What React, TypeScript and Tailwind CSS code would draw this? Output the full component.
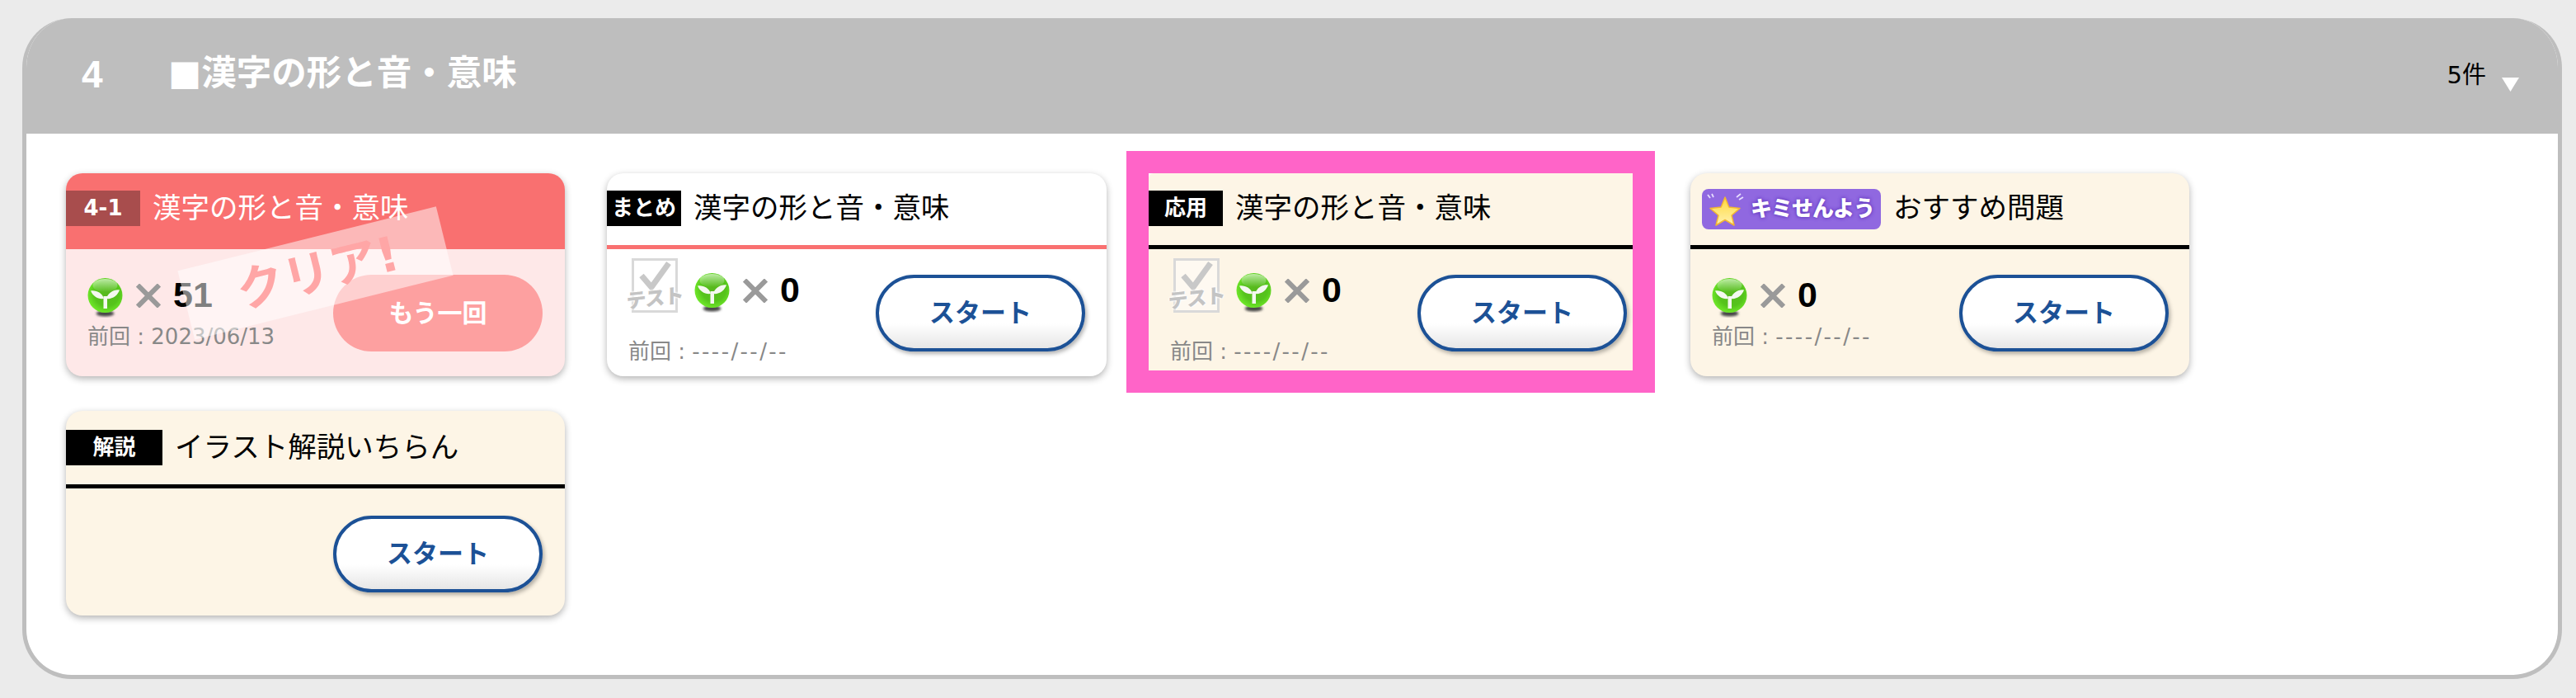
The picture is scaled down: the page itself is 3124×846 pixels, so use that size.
import React from "react";

const Seed = () => (
  <svg width="43" height="48" viewBox="0 0 43 48" className="shrink-0">
    <defs>
      <radialGradient id="seedBall" cx="0.55" cy="0.45" r="0.6">
        <stop offset="0" stopColor="#58b81e" />
        <stop offset="0.6" stopColor="#55c41c" />
        <stop offset="1" stopColor="#74ee2c" />
      </radialGradient>
      <linearGradient id="seedShine" x1="0" y1="0" x2="0" y2="1">
        <stop offset="0" stopColor="#ffffff" stopOpacity="0.6" />
        <stop offset="1" stopColor="#ffffff" stopOpacity="0" />
      </linearGradient>
      <filter id="seedBlur">
        <feGaussianBlur stdDeviation="1.5" />
      </filter>
    </defs>
    <ellipse cx="21.5" cy="43" rx="11" ry="3.5" fill="#444" filter="url(#seedBlur)" />
    <circle cx="21.5" cy="21" r="21" fill="url(#seedBall)" />
    <ellipse cx="21.5" cy="9" rx="15" ry="8" fill="url(#seedShine)" />
    <path d="M20 25C18 18 11 14.5 4 15.5 6.5 22 13 26 20 25ZM23 25C25 18 32 13.5 39 14.5 36.5 21.5 30 26 23 25Z" fill="#f4f8f0" />
    <rect x="19.5" y="22" width="4.5" height="15" fill="#f4f8f0" />
  </svg>
);

const Times = () => (
  <svg width="30" height="29" viewBox="0 0 30 29" className="shrink-0">
    <path d="M2 1.5 28 27.5M28 1.5 2 27.5" stroke="#9a9a9a" strokeWidth="6" fill="none" />
  </svg>
);

const TestMark = () => (
  <div className="relative w-[66px] h-[67px] shrink-0">
    <svg width="66" height="67" viewBox="0 0 66 67" className="block">
      <rect x="6.5" y="1.5" width="53" height="63" fill="#ffffff" fillOpacity="0.45" stroke="#d9d9d9" strokeWidth="3" />
      <path d="M17 21 29 35 50 6" stroke="#c8c8c8" strokeWidth="7" fill="none" />
    </svg>
    <span className="absolute -left-[2px] top-[34px] w-[70px] text-center text-[24px] leading-[30px] font-black tracking-[-1px] whitespace-nowrap text-[#c4c4c4] -skew-y-6 [text-shadow:0_0_2px_#ffffff,0_0_3px_#ffffff,0_0_3px_#ffffff]">
      テスト
    </span>
  </div>
);

const Star = () => (
  <svg width="46" height="40" viewBox="0 0 46 40" className="shrink-0">
    <defs>
      <linearGradient id="kimiStar" x1="0" y1="0" x2="0" y2="1">
        <stop offset="0" stopColor="#ffd83a" />
        <stop offset="1" stopColor="#fff2b0" />
      </linearGradient>
    </defs>
    <path
      d="M23 5 27.8 17 41 18.5 31 27 34 39 23 32.5 12 39 15 27 5 18.5 18.2 17Z"
      fill="url(#kimiStar)"
      stroke="#f2b632"
      strokeWidth="1.5"
      strokeLinejoin="round"
    />
    <path d="M2 2 5 6M7 1 9 5M42 1 37 5M45 5 40 8" stroke="#e6dcff" strokeWidth="1.8" fill="none" />
  </svg>
);

const Count = ({ n }: { n: number }) => (
  <div className="flex items-center">
    <Seed />
    <div className="ml-[16px] -mt-[6px]">
      <Times />
    </div>
    <span className="ml-[15px] -mt-[8px] font-['Liberation_Sans'] text-[43px] leading-[48px] font-bold text-black">
      {n}
    </span>
  </div>
);

const LastDate = ({ date }: { date: string }) => (
  <div className="text-[26px] leading-[36px] text-[#888888] whitespace-nowrap">
    前回 : <span className={date.startsWith("-") ? "tracking-[2.4px]" : ""}>{date}</span>
  </div>
);

const StartButton = ({ label = "スタート", faded = false }: { label?: string; faded?: boolean }) =>
  faded ? (
    <div className="w-[254px] h-[93px] rounded-full bg-[#fda0a0] flex items-center justify-center text-white text-[30px] font-bold shrink-0">
      {label}
    </div>
  ) : (
    <div className="w-[254px] h-[93px] rounded-full border-[4px] border-[#1c5196] bg-gradient-to-b from-white from-65% to-[#e6e6e6] shadow-[2px_3px_5px_rgba(0,0,0,0.3)] flex items-center justify-center text-[#1c5196] text-[31px] font-bold shrink-0">
      {label}
    </div>
  );

const Badge = ({ label, className }: { label: string; className: string }) => (
  <div className={`h-[43px] flex items-center justify-center text-white text-[26px] font-bold shrink-0 ${className}`}>
    {label}
  </div>
);

const Title = ({ text, color = "text-black" }: { text: string; color?: string }) => (
  <span className={`ml-[15px] text-[34.5px] leading-[43px] whitespace-nowrap ${color}`}>{text}</span>
);

export default function App() {
  return (
    <div className="h-[846px] overflow-hidden bg-[#ebebeb] pt-[22px] pl-[27px] [font-family:'DejaVu_Sans','Noto_Sans_CJK_JP',sans-serif]">
      <div className="w-[3080px] h-[801px] rounded-[60px] border-[5px] border-t-0 border-[#bebebe] bg-white overflow-hidden">
        <div className="h-[140px] -mx-[5px] bg-[#bebebe] pl-[72px] pr-[52px] flex items-center text-white font-bold">
          <span className="w-[105px] font-['Liberation_Sans'] text-[46px] leading-none -mt-[5px]">4</span>
          <span className="text-[42.5px] leading-none -mt-[5px] whitespace-nowrap">■漢字の形と音・意味</span>
          <span className="ml-auto text-[29px] leading-none font-normal text-black -mt-[2px]">5件</span>
          <svg width="21" height="17" viewBox="0 0 21 17" className="ml-[19px] mt-[20px]">
            <path d="M0 0H21L10.5 17Z" fill="#ffffff" />
          </svg>
        </div>

        <div className="pt-[48px] pl-[48px] flex flex-wrap">
          {/* 4-1 */}
          <div className="relative w-[605px] h-[246px] mr-[51px] rounded-[20px] bg-[#fee8e8] shadow-[0_3px_8px_rgba(0,0,0,0.3)]">
            <div className="h-[92px] rounded-t-[20px] bg-[#f97070] pt-[21px] flex items-start">
              <Badge label="4-1" className="w-[90px] bg-[#a84d4d]" />
              <Title text="漢字の形と音・意味" color="text-white" />
            </div>
            <div className="flex justify-between pl-[26px] pr-[27px]">
              <div className="pt-[35px]">
                <Count n={51} />
                <div className="mt-[5px]">
                  <LastDate date="2023/06/13" />
                </div>
              </div>
              <div className="pt-[31px]">
                <StartButton label="もう一回" faded />
              </div>
            </div>
            <div className="absolute left-[141px] top-[78px] w-[323px] h-[86px] -rotate-[14deg] bg-white/50 flex items-center justify-center pl-[6px] text-[#ffa6a6] text-[58px] leading-none font-bold whitespace-nowrap">
              クリア!
            </div>
          </div>

          {/* まとめ */}
          <div className="w-[606px] h-[246px] mr-[51px] rounded-[20px] bg-white shadow-[0_3px_8px_rgba(0,0,0,0.3)]">
            <div className="h-[92px] border-b-[5px] border-[#f97070] pt-[21px] flex items-start">
              <Badge label="まとめ" className="w-[90px] bg-black" />
              <Title text="漢字の形と音・意味" />
            </div>
            <div className="flex justify-between pl-[26px] pr-[26px]">
              <div className="pt-[11px]">
                <div className="flex items-start">
                  <div className="-ml-[1px]">
                    <TestMark />
                  </div>
                  <div className="ml-[15px] mt-[18px]">
                    <Count n={0} />
                  </div>
                </div>
                <div className="mt-[28px]">
                  <LastDate date="----/--/--" />
                </div>
              </div>
              <div className="pt-[31px]">
                <StartButton />
              </div>
            </div>
          </div>

          {/* 応用 (highlighted) */}
          <div className="w-[641px] h-[293px] -ml-[27px] -mt-[27px] -mb-[20px] mr-[43px] border-[27px] border-[#ff64c8]">
            <div className="h-full bg-[#fdf5e6] overflow-hidden rounded-tl-[6px]">
              <div className="h-[92px] border-b-[5px] border-black pt-[21px] flex items-start">
                <Badge label="応用" className="w-[90px] bg-black" />
                <Title text="漢字の形と音・意味" />
              </div>
              <div className="flex justify-between pl-[26px] pr-[7px]">
                <div className="pt-[11px]">
                  <div className="flex items-start">
                    <div className="-ml-[1px]">
                      <TestMark />
                    </div>
                    <div className="ml-[15px] mt-[18px]">
                      <Count n={0} />
                    </div>
                  </div>
                  <div className="mt-[28px]">
                    <LastDate date="----/--/--" />
                  </div>
                </div>
                <div className="pt-[31px]">
                  <StartButton />
                </div>
              </div>
            </div>
          </div>

          {/* キミせんよう */}
          <div className="w-[605px] h-[246px] rounded-[20px] bg-[#fdf5e6] shadow-[0_3px_8px_rgba(0,0,0,0.3)]">
            <div className="h-[92px] border-b-[5px] border-black pt-[19px] pl-[14px] flex items-start">
              <div className="w-[217px] h-[49px] rounded-[8px] bg-[#9068e0] flex items-center pl-[5px] shrink-0">
                <Star />
                <span className="ml-[8px] text-white text-[26px] tracking-[-1px] font-black whitespace-nowrap [text-shadow:0_0_4px_#6a3fc4,0_0_4px_#6a3fc4]">
                  キミせんよう
                </span>
              </div>
              <span className="ml-[15px] mt-[2px] text-[34.5px] leading-[43px] whitespace-nowrap text-black">おすすめ問題</span>
            </div>
            <div className="flex justify-between pl-[26px] pr-[25px]">
              <div className="pt-[35px]">
                <Count n={0} />
                <div className="mt-[5px]">
                  <LastDate date="----/--/--" />
                </div>
              </div>
              <div className="pt-[31px]">
                <StartButton />
              </div>
            </div>
          </div>

          {/* 解説 */}
          <div className="w-[605px] h-[248px] mt-[42px] rounded-[20px] bg-[#fdf5e6] shadow-[0_3px_8px_rgba(0,0,0,0.3)]">
            <div className="h-[94px] border-b-[5px] border-black pt-[23px] flex items-start">
              <Badge label="解説" className="w-[117px] bg-black" />
              <Title text="イラスト解説いちらん" />
            </div>
            <div className="flex justify-end pr-[27px] pt-[33px]">
              <StartButton />
            </div>
          </div>
        </div>
      </div>
    </div>
  );
}
